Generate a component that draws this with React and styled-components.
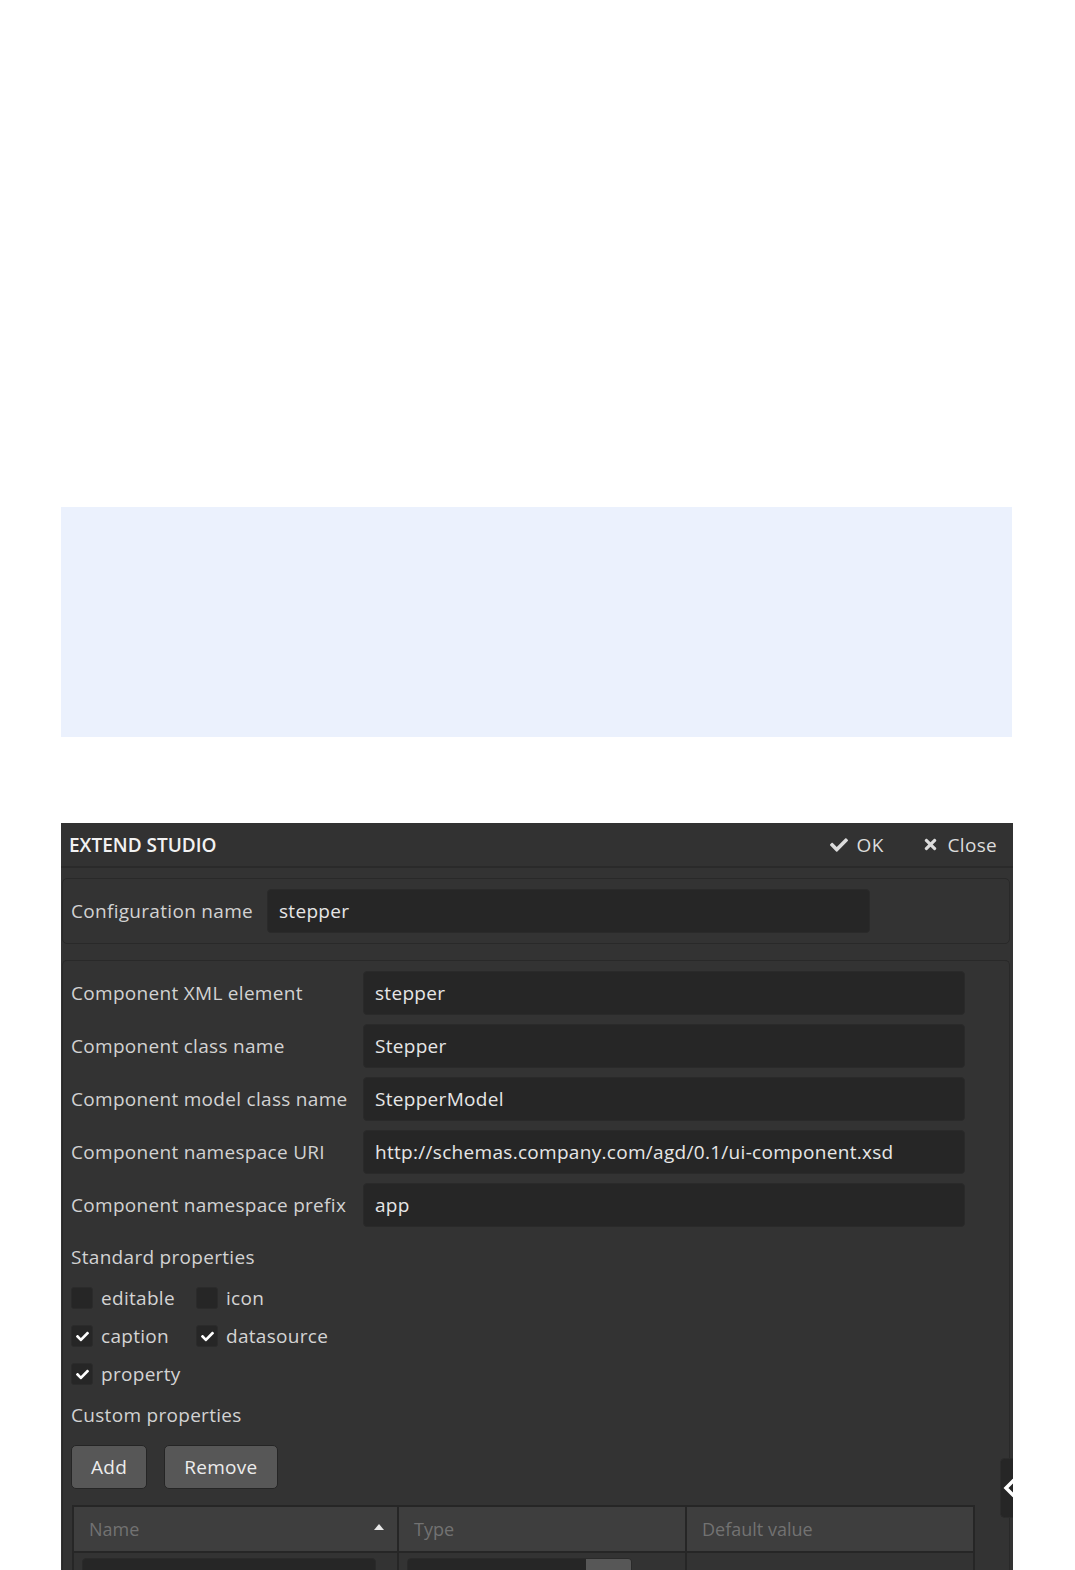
import React from "react";
import styled, { createGlobalStyle } from "styled-components";

const Global = createGlobalStyle`
  html, body { margin: 0; padding: 0; background: #fff; }
  body { font-family: "Open Sans", "Liberation Sans", sans-serif; overflow: hidden; }
  * { box-sizing: border-box; }
`;

const Page = styled.div`
  padding-top: 507px;
  padding-left: 61px;
  height: 1570px;
  overflow: hidden;
`;

const Banner = styled.div`
  width: 951px;
  height: 230px;
  background: #ebf1fd;
`;

const Panel = styled.div`
  position: relative;
  margin-top: 86px;
  width: 952px;
  background: #333333;
  color: #d4d4d4;
  font-size: 19px;
  letter-spacing: 0.3px;
  padding-bottom: 40px;
`;

const Header = styled.div`
  height: 45px;
  display: flex;
  align-items: center;
  justify-content: space-between;
  padding: 0 16px 0 8px;
  border-bottom: 2px solid #2a2a2a;
  background: #323232;
`;

const Title = styled.div`
  font-weight: 600;
  color: #f2f2f2;
  font-size: 19px;
  letter-spacing: 0;
`;

const Actions = styled.div`
  display: flex;
  gap: 38px;
`;

const Action = styled.div`
  display: flex;
  align-items: center;
  gap: 9px;
  color: #dcdcdc;
`;

const Section = styled.div`
  margin: ${(p) => p.$mt}px 3px 0 1px;
  border: 1px solid #292929;
  border-radius: 5px;
  padding: 10px 8px;
  background: #333;
  ${(p) => p.$open && "border-bottom: none; border-bottom-left-radius: 0; border-bottom-right-radius: 0;"}
`;

const InlineRow = styled.div`
  display: flex;
  align-items: center;
  gap: 14px;
`;

const FormGrid = styled.div`
  display: grid;
  grid-template-columns: 292px 602px;
  row-gap: 9px;
  align-items: center;
`;

const Label = styled.div`
  color: #d2d2d2;
  white-space: nowrap;
`;

const Input = styled.div`
  height: 44px;
  width: ${(p) => p.$w || 602}px;
  background: #262626;
  border: 1px solid #2a2a2a;
  border-radius: 4px;
  display: flex;
  align-items: center;
  padding: 0 11px;
  color: #e6e6e6;
  white-space: nowrap;
`;

const SubTitle = styled.div`
  margin-top: ${(p) => p.$mt}px;
  color: #d2d2d2;
  line-height: 24px;
`;

const CheckGrid = styled.div`
  margin-top: 17px;
  display: grid;
  grid-template-columns: 125px auto;
  justify-content: start;
  row-gap: 14px;
`;

const CheckItem = styled.div`
  display: flex;
  align-items: center;
  gap: 8px;
  height: 24px;
`;

const Box = styled.div`
  width: 22px;
  height: 22px;
  background: #262626;
  border: 1px solid #2b2b2b;
  border-radius: 3px;
  display: flex;
  align-items: center;
  justify-content: center;
  color: #fff;
`;

const Buttons = styled.div`
  margin-top: 18px;
  display: flex;
  gap: 17px;
`;

const Button = styled.div`
  height: 44px;
  padding: 0 19px;
  background: #575757;
  border: 1px solid #252525;
  border-radius: 5px;
  display: flex;
  align-items: center;
  color: #ececec;
`;

const Table = styled.div`
  margin-top: 16px;
  margin-left: 1px;
  width: 903px;
  border: 2px solid #262626;
  border-bottom: none;
`;

const TRow = styled.div`
  display: grid;
  grid-template-columns: 325px 288px 286px;
  background: ${(p) => (p.$head ? "#3e3e3e" : "#333")};
  height: ${(p) => (p.$head ? 46 : 60)}px;
  ${(p) => p.$head && "border-bottom: 2px solid #262626;"}
`;

const Cell = styled.div`
  position: relative;
  display: flex;
  align-items: ${(p) => (p.$head ? "center" : "flex-start")};
  padding: ${(p) => (p.$head ? "0 15px" : "5px 8px")};
  border-right: ${(p) => (p.$last ? "none" : "2px solid #262626")};
  color: #727272;
  font-size: 18px;
  letter-spacing: 0;
`;

const SortArrow = styled.div`
  position: absolute;
  right: 13px;
  top: 17px;
  width: 0;
  height: 0;
  border-left: 5px solid transparent;
  border-right: 5px solid transparent;
  border-bottom: 6px solid #e8e8e8;
`;

const CellInput = styled.div`
  height: 40px;
  width: ${(p) => p.$w}px;
  background: #262626;
  border: 1px solid #2a2a2a;
  border-radius: 4px;
`;

const Select = styled.div`
  display: flex;
  height: 40px;
  width: 225px;
  border-radius: 4px;
  overflow: hidden;
  border: 1px solid #2a2a2a;
`;

const SelectField = styled.div`
  flex: 1;
  background: #262626;
`;

const SelectBtn = styled.div`
  width: 45px;
  background: #575757;
`;

const SideTab = styled.div`
  position: absolute;
  right: 0;
  top: 635px;
  width: 13px;
  height: 60px;
  background: #262626;
  border: 1px solid #2c2c2c;
  border-right: none;
  border-radius: 5px 0 0 5px;
  display: flex;
  align-items: center;
  overflow: hidden;
`;

const Check = ({ size = 14 }) => (
  <svg width={size} height={size} viewBox="0 0 512 512">
    <path
      fill="currentColor"
      d="M173.9 439.4l-166.4-166.4c-10-10-10-26.2 0-36.2l36.2-36.2c10-10 26.2-10 36.2 0L192 312.7 432.1 72.6c10-10 26.2-10 36.2 0l36.2 36.2c10 10 10 26.2 0 36.2L210.1 439.4c-10 10-26.2 10-36.2 0z"
    />
  </svg>
);

const Times = ({ size = 15 }) => (
  <svg width={size} height={size} viewBox="0 0 352 512">
    <path
      fill="currentColor"
      d="M242.7 256l100.1-100.1c12.3-12.3 12.3-32.2 0-44.5l-22.2-22.2c-12.3-12.3-32.2-12.3-44.5 0L176 189.3 75.9 89.2c-12.3-12.3-32.2-12.3-44.5 0L9.2 111.5c-12.3 12.3-12.3 32.2 0 44.5L109.3 256 9.2 356.1c-12.3 12.3-12.3 32.2 0 44.5l22.2 22.2c12.3 12.3 32.2 12.3 44.5 0L176 322.7l100.1 100.1c12.3 12.3 32.2 12.3 44.5 0l22.2-22.2c12.3-12.3 12.3-32.2 0-44.5L242.7 256z"
    />
  </svg>
);

const CheckBox = ({ checked, label }) => (
  <CheckItem>
    <Box>{checked && <Check size={13} />}</Box>
    <span>{label}</span>
  </CheckItem>
);

const fields = [
  ["Component XML element", "stepper"],
  ["Component class name", "Stepper"],
  ["Component model class name", "StepperModel"],
  ["Component namespace URI", "http://schemas.company.com/agd/0.1/ui-component.xsd"],
  ["Component namespace prefix", "app"],
];

export default function App() {
  return (
    <>
      <Global />
      <Page>
        <Banner />
        <Panel>
          <Header>
            <Title>EXTEND STUDIO</Title>
            <Actions>
              <Action>
                <Check size={18} />
                OK
              </Action>
              <Action>
                <Times size={17} />
                Close
              </Action>
            </Actions>
          </Header>
          <Section $mt={10}>
            <InlineRow>
              <Label>Configuration name</Label>
              <Input $w={603}>stepper</Input>
            </InlineRow>
          </Section>
          <Section $mt={16} $open>
            <FormGrid>
              {fields.map(([l, v]) => (
                <React.Fragment key={l}>
                  <Label>{l}</Label>
                  <Input>{v}</Input>
                </React.Fragment>
              ))}
            </FormGrid>
            <SubTitle $mt={18}>Standard properties</SubTitle>
            <CheckGrid>
              <CheckBox label="editable" />
              <CheckBox label="icon" />
              <CheckBox checked label="caption" />
              <CheckBox checked label="datasource" />
              <CheckBox checked label="property" />
            </CheckGrid>
            <SubTitle $mt={17}>Custom properties</SubTitle>
            <Buttons>
              <Button>Add</Button>
              <Button>Remove</Button>
            </Buttons>
            <Table>
              <TRow $head>
                <Cell $head>
                  Name
                  <SortArrow />
                </Cell>
                <Cell $head>Type</Cell>
                <Cell $head $last>Default value</Cell>
              </TRow>
              <TRow>
                <Cell>
                  <CellInput $w={294} />
                </Cell>
                <Cell>
                  <Select>
                    <SelectField />
                    <SelectBtn />
                  </Select>
                </Cell>
                <Cell $last />
              </TRow>
            </Table>
          </Section>
          <SideTab>
            <svg width="16" height="24" viewBox="0 0 16 24" style={{ marginLeft: 2, flexShrink: 0 }}>
              <path d="M11 4 L3 12 L11 20" fill="none" stroke="#fff" strokeWidth="3.5" />
            </svg>
          </SideTab>
        </Panel>
      </Page>
    </>
  );
}
